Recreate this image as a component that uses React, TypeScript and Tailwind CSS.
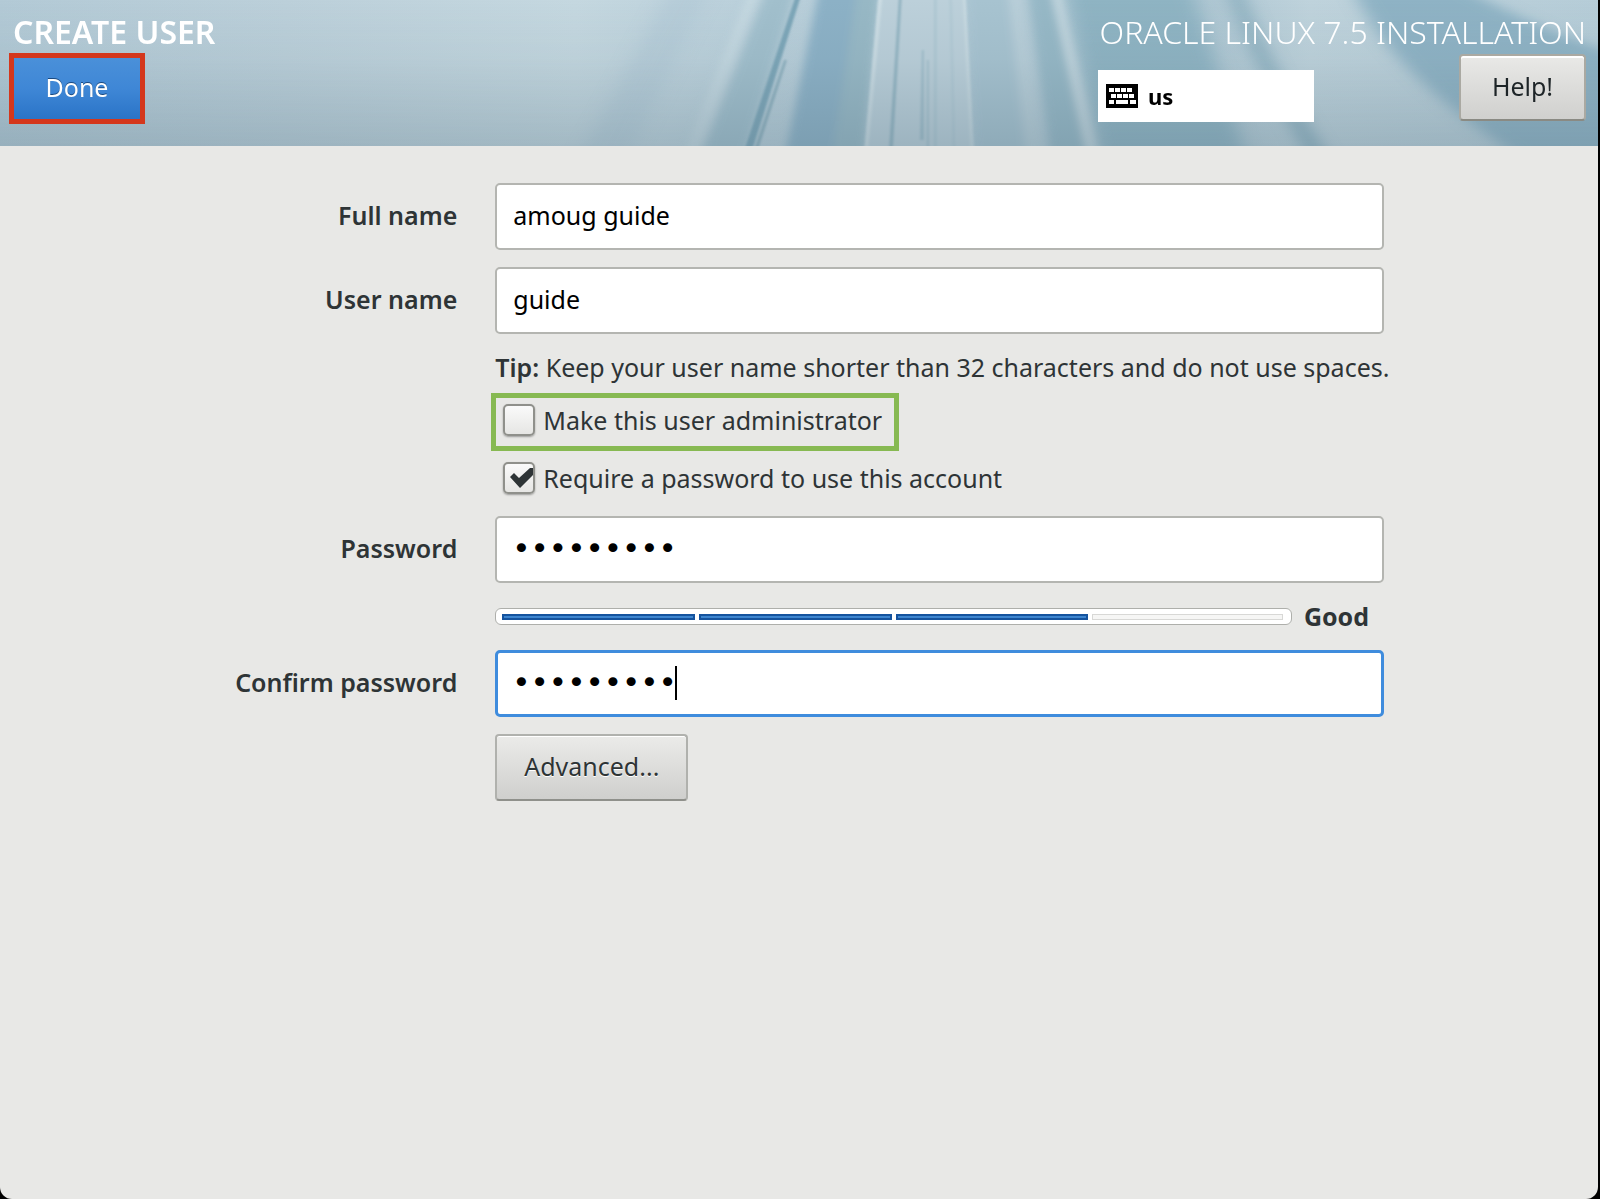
import type { InputHTMLAttributes } from 'react';

const Rays = () => {
  return (
    <svg
      className="absolute inset-0 w-full h-full"
      viewBox="0 0 1600 146"
      preserveAspectRatio="none"
      aria-hidden="true"
    >
      <defs>
        <linearGradient id="base" x1="0" x2="1" y1="0" y2="0">
          <stop offset="0" stopColor="#b3cad6" />
          <stop offset="0.18" stopColor="#bcd0da" />
          <stop offset="0.36" stopColor="#c5d8e0" />
          <stop offset="0.48" stopColor="#b9cfda" />
          <stop offset="0.75" stopColor="#adc6d2" />
          <stop offset="0.82" stopColor="#bfd3dc" />
          <stop offset="1" stopColor="#b6cdd8" />
        </linearGradient>
        <linearGradient id="shade" x1="0" x2="0" y1="0" y2="1">
          <stop offset="0" stopColor="#5b7888" stopOpacity="0" />
          <stop offset="0.4" stopColor="#5b7888" stopOpacity="0.08" />
          <stop offset="1" stopColor="#5b7888" stopOpacity="0.32" />
        </linearGradient>
        <filter id="soft" x="-20%" y="-20%" width="140%" height="140%">
          <feGaussianBlur stdDeviation="9 5" />
        </filter>
        <filter id="mid" x="-20%" y="-20%" width="140%" height="140%">
          <feGaussianBlur stdDeviation="4 2" />
        </filter>
        <filter id="fine" x="-20%" y="-20%" width="140%" height="140%">
          <feGaussianBlur stdDeviation="1" />
        </filter>
      </defs>
      <rect width="1600" height="146" fill="url(#base)" />
      <g filter="url(#soft)">
        <path d="M675-20h40L625 166h-50z" fill="#a9c3d1" opacity="0.4" />
        <path d="M1065-20H1190L1250 166H1104z" fill="#8fb4c3" />
        <path d="M1350-20C1385 60 1450 110 1540 170H1640V60C1600 50 1520 20 1450-20z" fill="#8fb3c5" />
        <path d="M1226-20h12C1268 60 1300 110 1335 166h-20C1280 100 1248 50 1226-20z" fill="#86abbb" />
      </g>
      <g filter="url(#mid)">
        <path d="M772-20h28L742 166h-44z" fill="#a1bfcc" />
        <path d="M756-20h8L692 166h-12z" fill="#c6d9e1" />
        <path d="M822-20H862L832 166H784z" fill="#8cb1c6" />
        <path d="M860-20H882L864 166H832z" fill="#97b8c5" />
        <path d="M966-20h44l20 186h-54z" fill="#a7c3d0" />
        <path d="M1028-20h22l42 186h-38z" fill="#96b8c6" />
        <path d="M1008-20h12l26 186h-18z" fill="#b8ced8" />
        <path d="M1050-20h8l44 186h-12z" fill="#c2d6de" />
      </g>
      <g filter="url(#fine)">
        <path d="M802-20h5L748 166h-8z" fill="#7ba5b7" />
        <path d="M785 60h3L759 150h-4z" fill="#8fb0be" />
        <path d="M881-20H966L976 166H864z" fill="#bcd0da" />
        <path d="M881-20h4L868 166h-4z" fill="#cbdce3" />
        <path d="M901-20h3L893 166h-4z" fill="#94b5c3" />
        <path d="M923 50h2v90h-4z" fill="#a0bdca" />
        <path d="M928 60h2v90h-2z" fill="#a3c0cc" />
        <path d="M935-20h3v186h-3z" fill="#afc8d3" />
        <path d="M950-20h3l4 186h-3z" fill="#b3cad5" />
        <path d="M963-20h3l10 186h-4z" fill="#c6d8e0" />
      </g>
      <rect width="1600" height="146" fill="url(#shade)" />
    </svg>
  );
};

const KeyboardIcon = () => {
  return (
    <svg width="32" height="24" viewBox="0 0 32 24" aria-hidden="true">
      <rect width="32" height="24" fill="#000" />
      <path
        fill="#fff"
        d="M3 4h5v4H3zM9 4h5v4H9zM15 4h5v4h-5zM21 4h5v4h-5zM5 10h5v4H5zM11 10h5v4h-5zM17 10h5v4h-5zM23 10h5v4h-5zM3 16h5v4H3zM10 16h12v4H10zM24 16h6v4h-6z"
      />
    </svg>
  );
};

const Header = () => {
  return (
    <header className="relative flex justify-between h-[146px] overflow-hidden">
      <Rays />
      <div className="relative flex flex-col items-start pl-[9px] pt-3">
        <h1 className="pl-1 h-[41px] leading-10 font-semibold text-[32px] text-white">
          CREATE USER
        </h1>
        <button className="w-[136px] h-[71px] pb-1 border-5 border-[#d4371c] bg-linear-to-b from-[#4a90d9] via-[#3f87d6] to-[#2a74c7] text-white text-[25px] [text-shadow:0_-1px_#1b4a80]">
          Done
        </button>
      </div>
      <div className="relative w-[488px] mr-3 pt-3">
        <h2 className="h-[41px] leading-10 font-light text-[32px] text-white whitespace-nowrap text-right">
          ORACLE LINUX 7.5 INSTALLATION
        </h2>
        <div className="flex justify-between items-start pt-px">
          <button className="flex items-center gap-[10px] w-[216px] h-[52px] mt-4 pl-2 bg-white text-black font-bold text-[22px]">
            <KeyboardIcon />
            us
          </button>
          <button className="w-[127px] h-[67px] pb-1 rounded border-2 border-[#aaa9a2] border-b-[#8a8a83] bg-linear-to-b from-[#e9e9e7] to-[#d0d0ce] text-[#1d2427] text-[25px] shadow-[inset_0_2px_#fff]">
            Help!
          </button>
        </div>
      </div>
    </header>
  );
};

const Label = ({ id, text }: { id: string; text: string }) => {
  return (
    <label htmlFor={id} className="self-center pb-1 text-right font-semibold">
      {text}
    </label>
  );
};

const Field = (props: InputHTMLAttributes<HTMLInputElement>) => {
  return (
    <input
      {...props}
      className="w-full h-[67px] px-4 pb-1 rounded-[5px] border-2 border-[#b4b5b1] bg-white text-black outline-none"
    />
  );
};

const Check = ({ label, checked }: { label: string; checked?: boolean }) => {
  return (
    <label className="flex items-center gap-2 h-[34px] whitespace-nowrap">
      <span className="relative">
        <input
          type="checkbox"
          defaultChecked={checked}
          className="peer block appearance-none size-8 rounded-[5px] border-2 border-[#8f908b] bg-linear-to-b from-[#fafafa] to-[#e6e6e4] shadow-[0_1px_2px_#00000055]"
        />
        <svg
          className="absolute inset-0 hidden peer-checked:block"
          width="32"
          height="32"
          viewBox="0 0 32 32"
          aria-hidden="true"
        >
          <path d="M7 15l4-4 5 5L27 6h3v7L17 26z" fill="#2e3436" />
        </svg>
      </span>
      <span>{label}</span>
    </label>
  );
};

const Strength = ({ level }: { level: number }) => {
  return (
    <div className="flex items-center gap-3">
      <div
        role="meter"
        aria-label="Password strength"
        aria-valuemin={0}
        aria-valuemax={4}
        aria-valuenow={level}
        className="flex flex-1 gap-1 h-[17px] py-[5px] pl-1.5 pr-2 rounded-md border border-[#aeafab] bg-white"
      >
        {[1, 2, 3, 4].map((n) => (
          <div
            key={n}
            className={
              n <= level
                ? 'flex-1 h-[6px] border-2 border-[#15539e] bg-[#3d85cf]'
                : 'flex-1 h-[6px] border border-[#d8d8d6] bg-[#f6f6f5]'
            }
          />
        ))}
      </div>
      <span className="w-20 font-bold">Good</span>
    </div>
  );
};

export default function App() {
  return (
    <div className="min-h-screen flex bg-black font-['Noto_Sans','Open_Sans',sans-serif] text-[25px] leading-[34px] text-[#2e3436]">
      <main className="flex-1 mr-0.5 rounded-b-xl overflow-hidden bg-[#e8e8e6]">
        <Header />
        <form className="grid grid-cols-[457fr_minmax(0,888fr)_176fr] gap-x-[38px] pt-[37px]">
          <Label id="fullname" text="Full name" />
          <Field id="fullname" defaultValue="amoug guide" />
          <span />

          <span className="col-span-3 h-[17px]" />

          <Label id="username" text="User name" />
          <Field id="username" defaultValue="guide" />
          <span />

          <div className="col-start-2 pt-4">
            <p className="whitespace-nowrap">
              <b className="font-semibold">Tip:</b> Keep your user name shorter than 32 characters and do not use spaces.
            </p>
            <div className="w-[408px] h-[58px] mt-[9px] -ml-1 pl-[7px] pt-[5px] border-5 border-[#87b952]">
              <Check label="Make this user administrator" />
            </div>
            <div className="h-[65px] pl-2 pt-[10px]">
              <Check label="Require a password to use this account" checked />
            </div>
          </div>
          <span />

          <Label id="password" text="Password" />
          <input
            id="password"
            type="password"
            defaultValue="guidepass"
            className="w-full h-[67px] px-[15px] pb-1 rounded-[5px] border-2 border-[#b4b5b1] bg-white text-black outline-none font-['DejaVu_Sans',sans-serif] text-[31px]"
          />
          <span />

          <div className="col-start-2 h-[67px] pt-4">
            <Strength level={3} />
          </div>
          <span />

          <Label id="confirm" text="Confirm password" />
          <div className="relative">
            <input
              id="confirm"
              type="password"
              defaultValue="guidepass"
              className="w-full h-[67px] px-3.5 pb-1 rounded-[5px] border-3 border-[#3f8cdd] bg-white text-black outline-none font-['DejaVu_Sans',sans-serif] text-[31px]"
            />
            <span className="absolute left-[180px] top-4 w-0.5 h-[34px] bg-black" />
          </div>
          <span />

          <div className="col-start-2 pt-[17px]">
            <button
              type="button"
              className="w-[193px] h-[67px] pb-1 rounded border-2 border-[#b0b1ad] border-b-[#8f908b] bg-linear-to-b from-[#ebebe9] to-[#cfcfcd] text-[#2e3436] shadow-[inset_0_1px_#fff] [text-shadow:0_1px_#fff]"
            >
              Advanced...
            </button>
          </div>
        </form>
      </main>
    </div>
  );
}
